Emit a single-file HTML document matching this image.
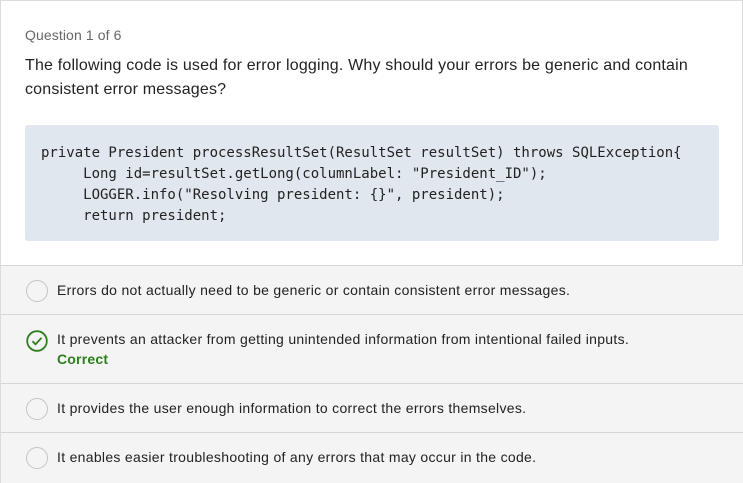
<!DOCTYPE html>
<html><head><style>
*{margin:0;padding:0;box-sizing:border-box}
body{width:743px;height:483px;background:#fff;font-family:"Liberation Sans",sans-serif;color:#2a2a2a;overflow:hidden;position:relative}
.frame{position:absolute;left:0;top:0;width:743px;height:483px;border:1px solid #dcdcdc;border-bottom:none}
.q{position:absolute;left:25px;top:27px;font-size:14px;color:#666;letter-spacing:0.1px}
.t{position:absolute;left:25px;top:54px;font-size:16px;line-height:24px;color:#222;width:700px;letter-spacing:0.18px}
.code{position:absolute;left:25px;top:125px;width:694px;height:116px;background:#e1e7ee;border-radius:3px;font-family:"DejaVu Sans Mono",monospace;font-size:14px;line-height:21px;padding:18px 16px;white-space:pre;color:#222}
.row{position:absolute;left:1px;width:742px;background:#f4f4f4;border-top:1px solid #d6d6d6;font-size:14px;color:#222;letter-spacing:0.3px}
.row .c{position:absolute;left:25px;width:22px;height:22px;border:1px solid #c4c4c4;border-radius:50%;background:#f4f4f4}
.row .x{position:absolute;left:56px}
.ok{color:#2e7d1e;font-weight:bold;letter-spacing:0.2px}
</style></head><body>
<div class="frame"></div>
<div class="q">Question 1 of 6</div>
<div class="t">The following code is used for error logging. Why should your errors be generic and contain consistent error messages?</div>
<div class="code">private President processResultSet(ResultSet resultSet) throws SQLException{
     Long id=resultSet.getLong(columnLabel: "President_ID");
     LOGGER.info("Resolving president: {}", president);
     return president;</div>
<div class="row" style="top:265px;height:49px"><div class="c" style="top:14px"></div><div class="x" style="top:16px">Errors do not actually need to be generic or contain consistent error messages.</div></div>
<div class="row" style="top:314px;height:69px"><svg style="position:absolute;left:25px;top:15px" width="22" height="22" viewBox="0 0 22 22"><circle cx="11" cy="11" r="9.8" fill="none" stroke="#2e7d1e" stroke-width="1.8"/><path d="M6.5 11.3l3 3 6-6.5" fill="none" stroke="#2e7d1e" stroke-width="1.8"/></svg><div class="x" style="top:16px">It prevents an attacker from getting unintended information from intentional failed inputs.</div><div class="x ok" style="top:36px">Correct</div></div>
<div class="row" style="top:383px;height:49px"><div class="c" style="top:14px"></div><div class="x" style="top:16px">It provides the user enough information to correct the errors themselves.</div></div>
<div class="row" style="top:432px;height:51px"><div class="c" style="top:14px"></div><div class="x" style="top:16px">It enables easier troubleshooting of any errors that may occur in the code.</div></div>
</body></html>
